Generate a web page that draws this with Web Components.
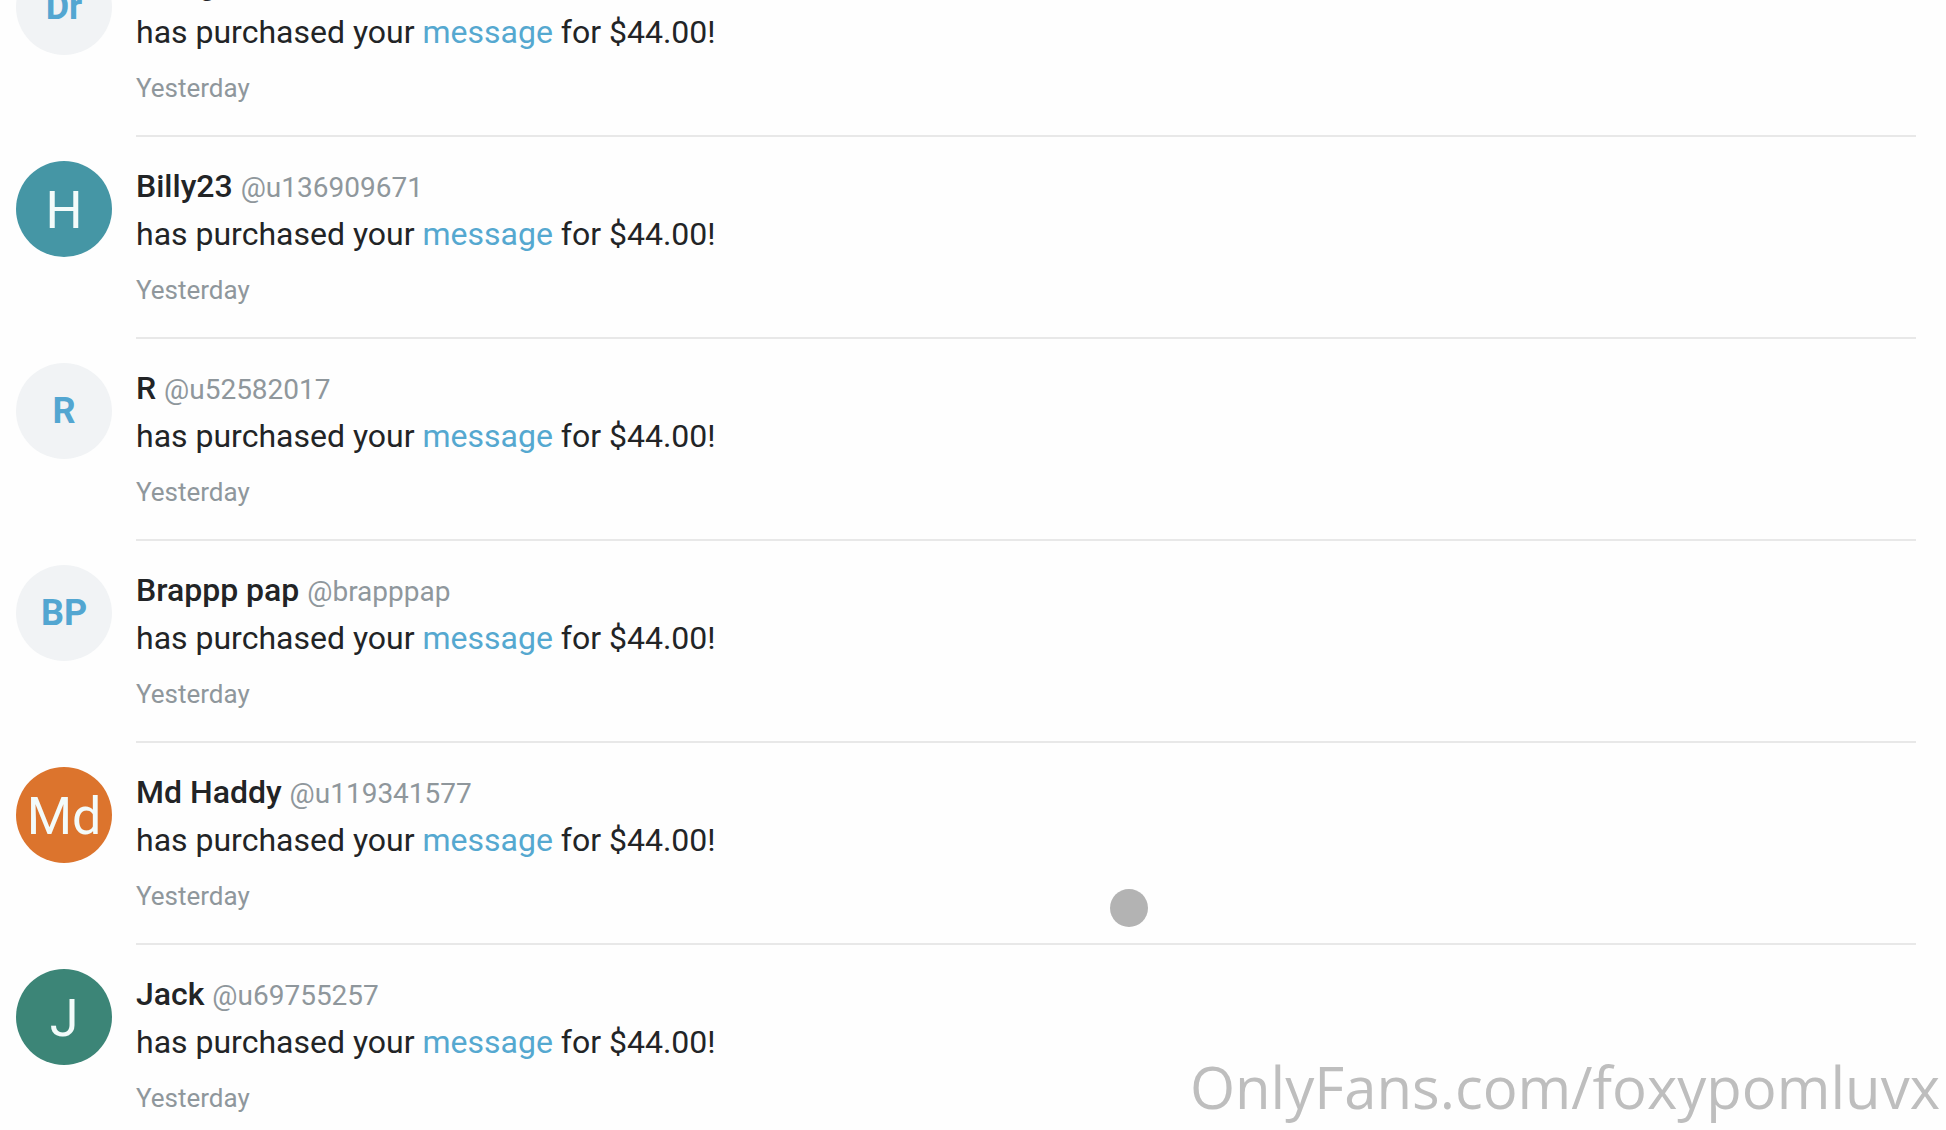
<!DOCTYPE html>
<html lang="en">
<head>
<meta charset="utf-8">
<meta name="viewport" content="width=device-width, initial-scale=1">
<title>Notifications</title>
<style>
  html, body { margin: 0; height: 100%; background: #fefefe; }
  body { overflow: hidden; font-family: Roboto, "Liberation Sans", sans-serif; color: #222426; }
</style>
</head>
<body>
<notification-feed>
  <purchase-notice initials="Dr" name="Dr Og" handle="" amount="$44.00"></purchase-notice>
  <purchase-notice initials="H" tone="#4596a5" name="Billy23" handle="@u136909671" amount="$44.00"></purchase-notice>
  <purchase-notice initials="R" name="R" handle="@u52582017" amount="$44.00"></purchase-notice>
  <purchase-notice initials="BP" name="Brappp pap" handle="@brapppap" amount="$44.00"></purchase-notice>
  <purchase-notice initials="Md" tone="#dc742d" name="Md Haddy" handle="@u119341577" amount="$44.00"></purchase-notice>
  <purchase-notice initials="J" tone="#3c8577" name="Jack" handle="@u69755257" amount="$44.00"></purchase-notice>
</notification-feed>
<touch-pointer></touch-pointer>
<page-watermark>OnlyFans.com/foxypomluvx</page-watermark>

<script>
class NotificationFeed extends HTMLElement {
  constructor() {
    super();
    this.attachShadow({ mode: 'open' }).innerHTML = `
      <style>
        :host { display: block; height: 100%; overflow: hidden; }
        main { display: flex; flex-direction: column; margin-top: -65px; padding: 0 30px 0 16px; }
      </style>
      <main><slot></slot></main>`;
  }
}

class UserAvatar extends HTMLElement {
  connectedCallback() {
    const tone = this.getAttribute('tone');
    this.attachShadow({ mode: 'open' }).innerHTML = `
      <style>
        :host { display: flex; flex: none; align-items: center; justify-content: center;
          box-sizing: border-box; width: 96px; height: 96px; border-radius: 50%;
          background: #f1f3f5; color: #53a6d1; font-size: 36px; font-weight: 700; line-height: 1; }
        :host([tone]) { padding-top: 4px; background: ${tone}; color: #f3fbfa; font-size: 52px; font-weight: 400; }
      </style>
      <span><slot></slot></span>`;
  }
}

class PurchaseNotice extends HTMLElement {
  connectedCallback() {
    const get = (key) => this.getAttribute(key);
    const tone = get('tone') ? `tone="${get('tone')}"` : '';
    this.attachShadow({ mode: 'open' }).innerHTML = `
      <style>
        :host { display: block; }
        article { display: flex; gap: 24px; }
        user-avatar { margin-top: 24px; }
        .body { flex: 1; padding: 25px 0 26px; border-bottom: 2px solid #e8e8e8; }
        :host(:last-of-type) .body { border-bottom-color: transparent; }
        p { margin: 0; font-size: 32px; line-height: 48px; }
        strong { font-weight: 500; }
        .handle { font-size: 28px; line-height: 1; color: #8f979c; }
        a { color: #55a8d0; text-decoration: none; }
        time { display: block; margin-top: 11px; font-size: 26px; line-height: 42px; color: #8f979c; }
      </style>
      <article>
        <user-avatar ${tone}>${get('initials')}</user-avatar>
        <div class="body">
          <p><strong>${get('name')}</strong> <span class="handle">${get('handle')}</span></p>
          <p>has purchased your <a href="#message">message</a> for ${get('amount')}!</p>
          <time>Yesterday</time>
        </div>
      </article>`;
  }
}

class TouchPointer extends HTMLElement {
  constructor() {
    super();
    this.attachShadow({ mode: 'open' }).innerHTML = `
      <style>
        :host { position: absolute; left: 1110px; top: 889px; width: 38px; height: 38px;
          border-radius: 50%; background: #b3b3b3; }
      </style>`;
  }
}

class PageWatermark extends HTMLElement {
  constructor() {
    super();
    this.attachShadow({ mode: 'open' }).innerHTML = `
      <style>
        :host { position: absolute; right: 6px; bottom: 0; color: #bebebe; white-space: nowrap;
          font: 400 58px/86px "Open Sans", "Noto Sans", sans-serif; }
      </style>
      <slot></slot>`;
  }
}

customElements.define('notification-feed', NotificationFeed);
customElements.define('user-avatar', UserAvatar);
customElements.define('purchase-notice', PurchaseNotice);
customElements.define('touch-pointer', TouchPointer);
customElements.define('page-watermark', PageWatermark);
</script>
</body>
</html>
